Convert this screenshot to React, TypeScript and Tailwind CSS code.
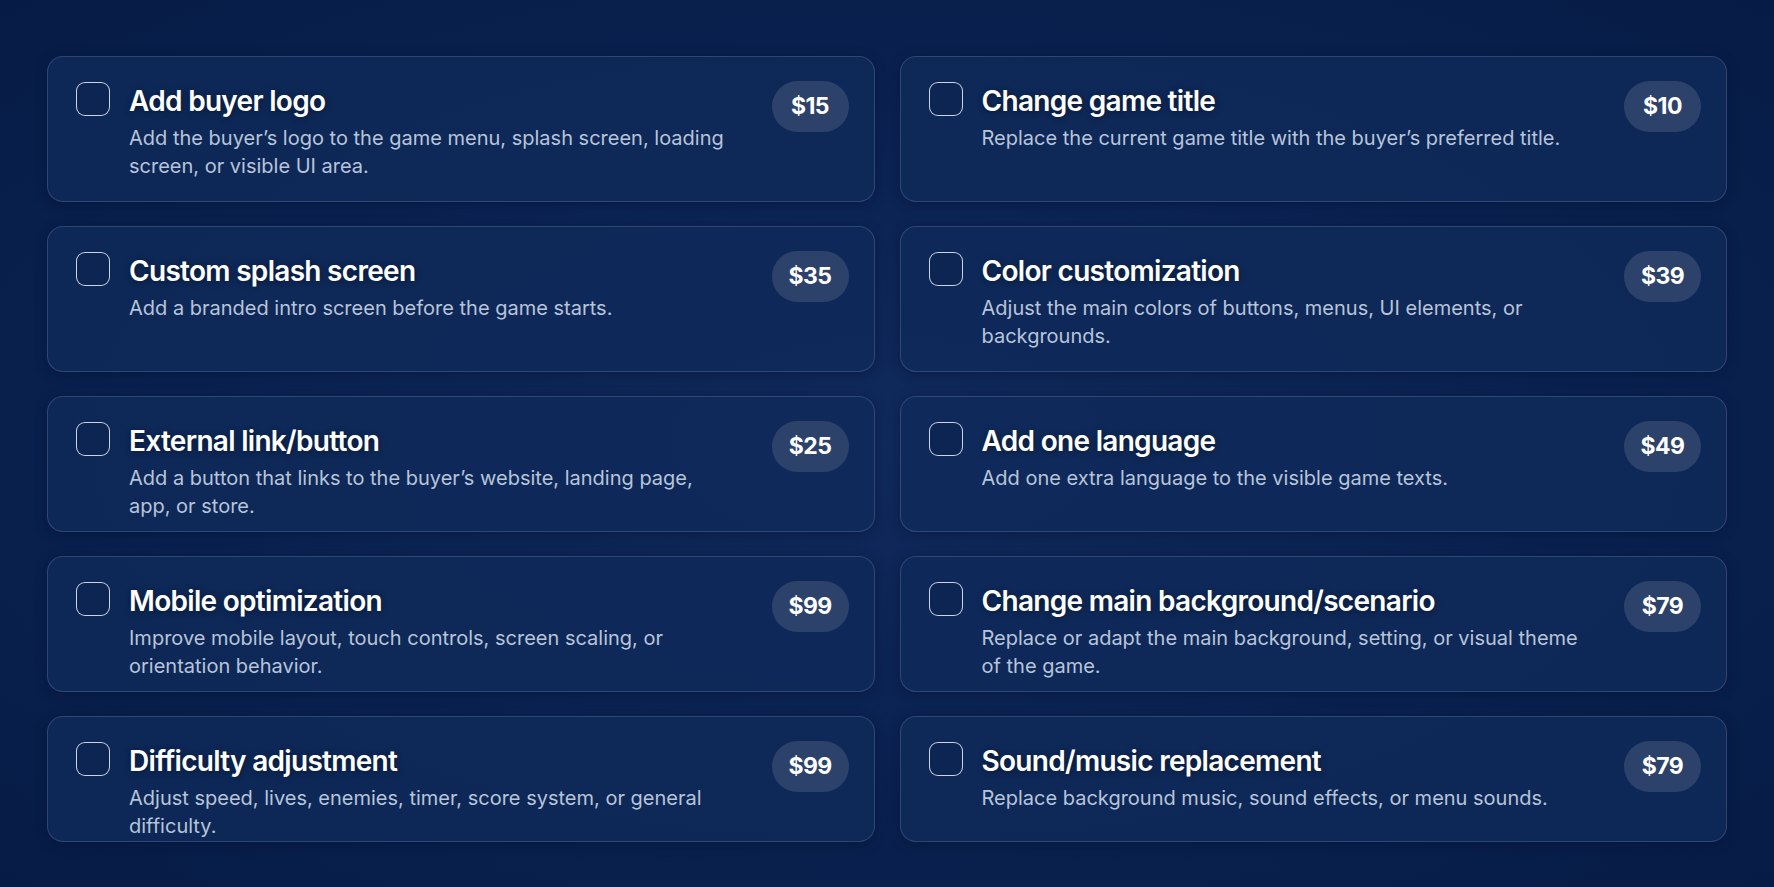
type Addon = {
  title: string;
  description: string;
  price: number;
};

const addons: Addon[] = [
  {
    title: "Add buyer logo",
    description:
      "Add the buyer’s logo to the game menu, splash screen, loading screen, or visible UI area.",
    price: 15,
  },
  {
    title: "Change game title",
    description: "Replace the current game title with the buyer’s preferred title.",
    price: 10,
  },
  {
    title: "Custom splash screen",
    description: "Add a branded intro screen before the game starts.",
    price: 35,
  },
  {
    title: "Color customization",
    description: "Adjust the main colors of buttons, menus, UI elements, or backgrounds.",
    price: 39,
  },
  {
    title: "External link/button",
    description:
      "Add a button that links to the buyer’s website, landing page, app, or store.",
    price: 25,
  },
  {
    title: "Add one language",
    description: "Add one extra language to the visible game texts.",
    price: 49,
  },
  {
    title: "Mobile optimization",
    description:
      "Improve mobile layout, touch controls, screen scaling, or orientation behavior.",
    price: 99,
  },
  {
    title: "Change main background/scenario",
    description:
      "Replace or adapt the main background, setting, or visual theme of the game.",
    price: 79,
  },
  {
    title: "Difficulty adjustment",
    description:
      "Adjust speed, lives, enemies, timer, score system, or general difficulty.",
    price: 99,
  },
  {
    title: "Sound/music replacement",
    description: "Replace background music, sound effects, or menu sounds.",
    price: 79,
  },
];

function AddonCard({ addon }: { addon: Addon }) {
  return (
    <label className="flex items-start gap-[19px] rounded-2xl border border-[#8fa3c8]/25 bg-[#0f2a5a]/80 pl-[28px] pr-[25px] pt-[24px] shadow-[0_2px_12px_rgba(0,10,40,0.35)] cursor-pointer">
      <input type="checkbox" className="peer sr-only" />
      <span className="mt-[1px] h-[34px] w-[34px] shrink-0 rounded-[9px] border-[1.5px] border-[#e2e8f2]/90 bg-[#0d2552]" />
      <div className="min-w-0 flex-1 pr-[16px]">
        <h3 className="mt-[3px] text-[28px] font-semibold leading-[35px] tracking-tight text-white [text-shadow:0_1px_6px_rgba(0,0,0,0.45)]">
          {addon.title}
        </h3>
        <p className="mt-[5px] max-w-[604px] text-[20px] leading-[28px] text-[#b8c4d9]">
          {addon.description}
        </p>
      </div>
      <span className="flex h-[51px] w-[77px] shrink-0 items-center justify-center rounded-full bg-[#34496f]/80 text-[23px] font-bold tracking-tight text-white">
        ${addon.price}
      </span>
    </label>
  );
}

export default function App() {
  return (
    <div
      className="min-h-screen w-full bg-[radial-gradient(ellipse_at_center,_#102a5c_0%,_#0a2150_55%,_#061c46_100%)] px-[47px] pt-[56px] pb-[45px]"
      style={{ fontFamily: "Inter, 'Noto Sans', sans-serif" }}
    >
      <div className="grid grid-cols-2 grid-rows-[146px_146px_136px_136px_126px] gap-x-[25px] gap-y-[24px]">
        {addons.map((addon) => (
          <AddonCard key={addon.title} addon={addon} />
        ))}
      </div>
    </div>
  );
}
